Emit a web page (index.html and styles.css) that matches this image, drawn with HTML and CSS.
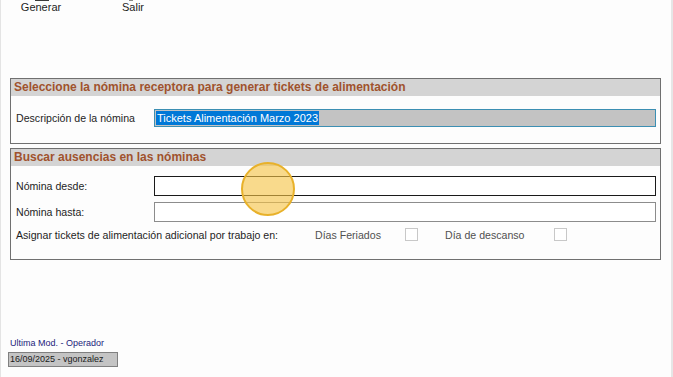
FILE: index.html
```html
<!DOCTYPE html>
<html lang="es">
<head>
<meta charset="utf-8">
<link rel="stylesheet" href="styles.css">
</head>
<body>
<div class="window">
  <div class="toolbar">
    <div class="tool tool-gen"><span class="tool-icon"></span><span>Generar</span></div>
    <div class="tool tool-exit"><span class="tool-icon"></span><span>Salir</span></div>
  </div>

  <section class="panel panel-one">
    <div class="panel-head">Seleccione la nómina receptora para generar tickets de alimentación</div>
    <div class="panel-body">
      <div class="row">
        <label class="lbl">Descripción de la nómina</label>
        <div class="field field-sel"><span class="sel">Tickets Alimentación Marzo 2023</span></div>
      </div>
    </div>
  </section>

  <section class="panel panel-two">
    <div class="panel-head">Buscar ausencias en las nóminas</div>
    <div class="panel-body body-two">
      <div class="row">
        <label class="lbl">Nómina desde:</label>
        <div class="field field-focus"></div>
      </div>
      <div class="row">
        <label class="lbl">Nómina hasta:</label>
        <div class="field field-plain"></div>
      </div>
      <div class="row row-check">
        <label class="lbl lbl-wide">Asignar tickets de alimentación adicional por trabajo en:</label>
        <span class="opt opt-one">Días Feriados</span><span class="chk"></span>
        <span class="opt opt-two">Día de descanso</span><span class="chk"></span>
      </div>
    </div>
  </section>

  <div class="footer">
    <div class="foot-lbl">Ultima Mod. - Operador</div>
    <div class="foot-box">16/09/2025 - vgonzalez</div>
  </div>

  <div class="click-dot"></div>
</div>
</body>
</html>
```

FILE: styles.css
```css
html, body {
  margin: 0;
  padding: 0;
  background: #ffffff;
}
body {
  font-family: "Liberation Sans", Arial, sans-serif;
  font-size: 10.6px;
  color: #1e1e1e;
}
.window {
  position: relative;
  width: 670px;
  height: 377px;
  background: #fdfdfd;
  border-left: 1px solid #e4e4e4;
  border-right: 2px solid #e6e6e6;
  box-sizing: content-box;
  overflow: hidden;
}
.toolbar {
  display: flex;
  height: 78px;
  align-items: flex-start;
}
.tool {
  position: relative;
  display: flex;
  flex-direction: column;
  align-items: center;
  font-size: 11px;
  line-height: 13px;
  padding-top: 1px;
}
.tool-gen { margin-left: 20px; width: 40px; }
.tool-exit { margin-left: 62px; width: 20px; }
.tool-icon {
  position: absolute;
  top: -1px;
  left: 50%;
  width: 14px;
  height: 2px;
  margin-left: -6px;
  background: #3a3a3a;
}
.tool-exit .tool-icon {
  width: 4px;
  margin-left: -4px;
  background: #8a8a8a;
}
.panel {
  margin-left: 9px;
  width: 649px;
  border: 1px solid #707070;
  background: #fdfdfd;
}
.panel-two { margin-top: 4px; }
.panel-head {
  height: 17px;
  line-height: 16px;
  background: #d4d4d4;
  color: #a0522d;
  font-weight: bold;
  font-size: 12px;
  padding-left: 3px;
}
.panel-body {
  padding: 13px 4px 16px 5px;
  display: flex;
  flex-direction: column;
}
.body-two {
  padding-top: 10px;
  padding-bottom: 18px;
  gap: 6px;
}
.row {
  display: flex;
  align-items: center;
}
.lbl {
  width: 138px;
  flex: none;
  color: #1e1e1e;
}
.lbl-wide { width: 299px; }
.field {
  flex: 1;
  height: 20px;
  box-sizing: border-box;
  background: #ffffff;
}
.field-sel {
  height: 18px;
  border: 1px solid #3c8fb3;
  background: #c3c3c3;
  padding: 1px 0 0 1px;
  display: flex;
}
.sel {
  background: #0078d7;
  color: #ffffff;
  font-size: 11px;
  line-height: 14px;
  height: 14px;
  padding: 0 1px;
}
.field-focus { border: 1px solid #1a1a1a; }
.field-plain { border: 1px solid #8c8c8c; }
.row-check { height: 13px; }
.opt { color: #505050; }
.opt-one { width: 90px; }
.opt-two { width: 109px; margin-left: 27px; }
.chk {
  width: 11px;
  height: 11px;
  border: 1px solid #c8c8c8;
  background: #ffffff;
}
.footer {
  position: absolute;
  left: 7px;
  top: 338px;
}
.foot-lbl {
  font-size: 9px;
  line-height: 11px;
  color: #1c1c7b;
  padding-left: 2px;
}
.foot-box {
  margin-top: 3px;
  width: 110px;
  height: 15px;
  line-height: 13px;
  box-sizing: border-box;
  border: 1px solid #808080;
  background: #c4c4c4;
  font-size: 9px;
  color: #1a1a1a;
  padding-left: 1px;
}
.click-dot {
  position: absolute;
  left: 240px;
  top: 162px;
  width: 50px;
  height: 50px;
  border-radius: 50%;
  border: 2px solid #e8b12a;
  background: rgba(246, 196, 70, 0.62);
}
```
